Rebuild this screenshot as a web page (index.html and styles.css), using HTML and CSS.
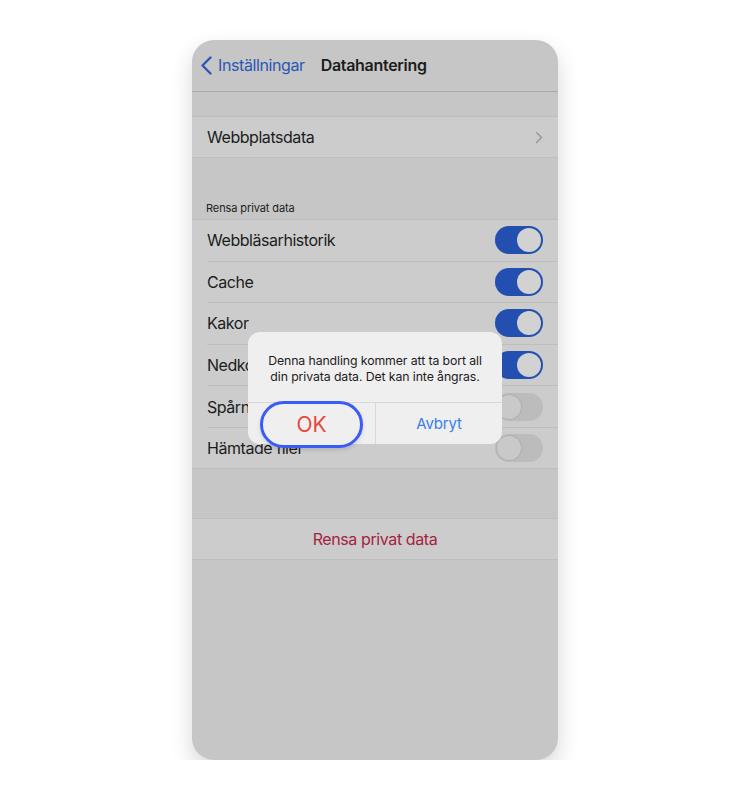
FILE: index.html
```html
<!DOCTYPE html>
<html lang="sv">
<head>
<meta charset="utf-8">
<title>Datahantering</title>
<link rel="stylesheet" href="styles.css">
</head>
<body>
<div class="phone">
  <div class="nav">
    <svg class="back" width="13" height="19" viewBox="0 0 13 19"><path d="M10.5 1.5 L2.5 9.5 L10.5 17.5" fill="none" stroke="#2b57b8" stroke-width="2.4" stroke-linecap="round" stroke-linejoin="round"/></svg>
    <span class="back-label">Inställningar</span>
    <span class="title">Datahantering</span>
  </div>
  <div class="gap-top"></div>
  <div class="group">
    <div class="row single">
      <span class="label">Webbplatsdata</span>
      <svg class="chev" width="8" height="13" viewBox="0 0 8 13"><path d="M1.5 1.5 L6.5 6.5 L1.5 11.5" fill="none" stroke="#9a9a9a" stroke-width="1.6" stroke-linecap="round" stroke-linejoin="round"/></svg>
    </div>
  </div>
  <div class="section-header">Rensa privat data</div>
  <div class="group">
    <div class="row"><span class="label">Webbläsarhistorik</span><span class="toggle on"><span class="knob"></span></span></div>
    <div class="row"><span class="label">Cache</span><span class="toggle on"><span class="knob"></span></span></div>
    <div class="row"><span class="label">Kakor</span><span class="toggle on"><span class="knob"></span></span></div>
    <div class="row"><span class="label">Nedkopplade webbplatsdata</span><span class="toggle on"><span class="knob"></span></span></div>
    <div class="row"><span class="label">Spårningsskydd</span><span class="toggle"><span class="knob"></span></span></div>
    <div class="row last"><span class="label">Hämtade filer</span><span class="toggle"><span class="knob"></span></span></div>
  </div>
  <div class="gap-mid"></div>
  <div class="group">
    <div class="row single center"><span class="danger">Rensa privat data</span></div>
  </div>

  <div class="alert">
    <div class="alert-msg">Denna handling kommer att ta bort all din privata data. Det kan inte ångras.</div>
    <div class="alert-actions">
      <div class="alert-btn ok"></div>
      <div class="alert-btn cancel">Avbryt</div>
    </div>
  </div>
  <div class="ok-highlight">OK</div>
</div>
</body>
</html>
```

FILE: styles.css
```css
html, body {
  margin: 0;
  padding: 0;
  background: #ffffff;
}
body {
  font-family: Inter, "Noto Sans", "Liberation Sans", sans-serif;
  color: #1c1c1c;
}
.phone {
  position: relative;
  width: 366px;
  height: 720px;
  margin: 40px auto 0;
  background: #c6c6c6;
  border-radius: 22px;
  overflow: hidden;
  box-shadow: 0 10px 22px rgba(0, 0, 0, 0.16);
}
.nav {
  height: 52px;
  border-bottom: 1px solid #acacac;
  display: flex;
  align-items: center;
  padding-left: 8px;
  box-sizing: border-box;
}
.back {
  margin-right: 5px;
  margin-top: 0;
}
.back-label {
  font-size: 16px;
  letter-spacing: -0.4px;
  color: #2b57b8;
  margin-right: 16px;
  margin-top: -2px;
}
.title {
  font-size: 16px;
  letter-spacing: -0.3px;
  font-weight: 600;
  color: #1c1c1c;
  margin-top: -2px;
}
.gap-top {
  height: 24px;
}
.group {
  background: #cccccc;
  border-top: 1px solid #bebebe;
  border-bottom: 1px solid #bebebe;
}
.row {
  margin-left: 15px;
  padding-right: 15px;
  display: flex;
  align-items: center;
  justify-content: space-between;
  border-bottom: 1px solid #bebebe;
  box-sizing: border-box;
  height: 41.6px;
}
.row.last, .row.single {
  border-bottom: none;
  height: 40px;
}
.row.center {
  justify-content: center;
  margin-left: 0;
  padding-right: 0;
}
.label {
  font-size: 16px;
  letter-spacing: -0.45px;
  white-space: nowrap;
}
.section-header {
  height: 61px;
  box-sizing: border-box;
  padding: 43px 0 0 14px;
  font-size: 11px;
  letter-spacing: -0.1px;
  color: #222;
}
.toggle {
  width: 48px;
  height: 28px;
  border-radius: 14px;
  background: #bcbcbc;
  display: flex;
  align-items: center;
  padding: 0 2px;
  box-sizing: border-box;
  flex-shrink: 0;
}
.toggle .knob {
  width: 24px;
  height: 24px;
  border-radius: 50%;
  background: #c9c9c9;
  box-shadow: 0 0 0 1px #b0b0b0;
}
.toggle.on {
  background: #2350b0;
  justify-content: flex-end;
}
.toggle.on .knob {
  background: #d2d2d2;
  box-shadow: none;
}
.gap-mid {
  height: 49px;
}
.danger {
  font-size: 16px;
  letter-spacing: -0.4px;
  color: #a3243f;
}
.alert {
  position: absolute;
  left: 56px;
  top: 292px;
  width: 254px;
  height: 112px;
  background: #efefef;
  border-radius: 12px;
  display: flex;
  flex-direction: column;
}
.alert-msg {
  height: 71px;
  box-sizing: border-box;
  padding: 21px 14px 0;
  font-size: 12.3px;
  line-height: 16px;
  letter-spacing: -0.1px;
  text-align: center;
  color: #1c1c1c;
  border-bottom: 1px solid #d8d8d8;
}
.alert-actions {
  flex: 1;
  display: flex;
}
.alert-btn {
  flex: 1;
  display: flex;
  align-items: center;
  justify-content: center;
}
.alert-btn.ok {
  border-right: 1px solid #d8d8d8;
  flex: 0 0 127px;
}
.alert-btn.cancel {
  color: #3b7fe8;
  font-size: 15px;
  letter-spacing: -0.2px;
}
.ok-highlight {
  position: absolute;
  left: 68px;
  top: 361px;
  width: 103px;
  height: 47px;
  box-sizing: border-box;
  border: 3px solid #3a5cf6;
  border-radius: 24px;
  background: #efefef;
  color: #e8483c;
  font-size: 21px;
  display: flex;
  align-items: center;
  justify-content: center;
  box-shadow: 0 2px 4px rgba(0, 0, 0, 0.12);
}
```
